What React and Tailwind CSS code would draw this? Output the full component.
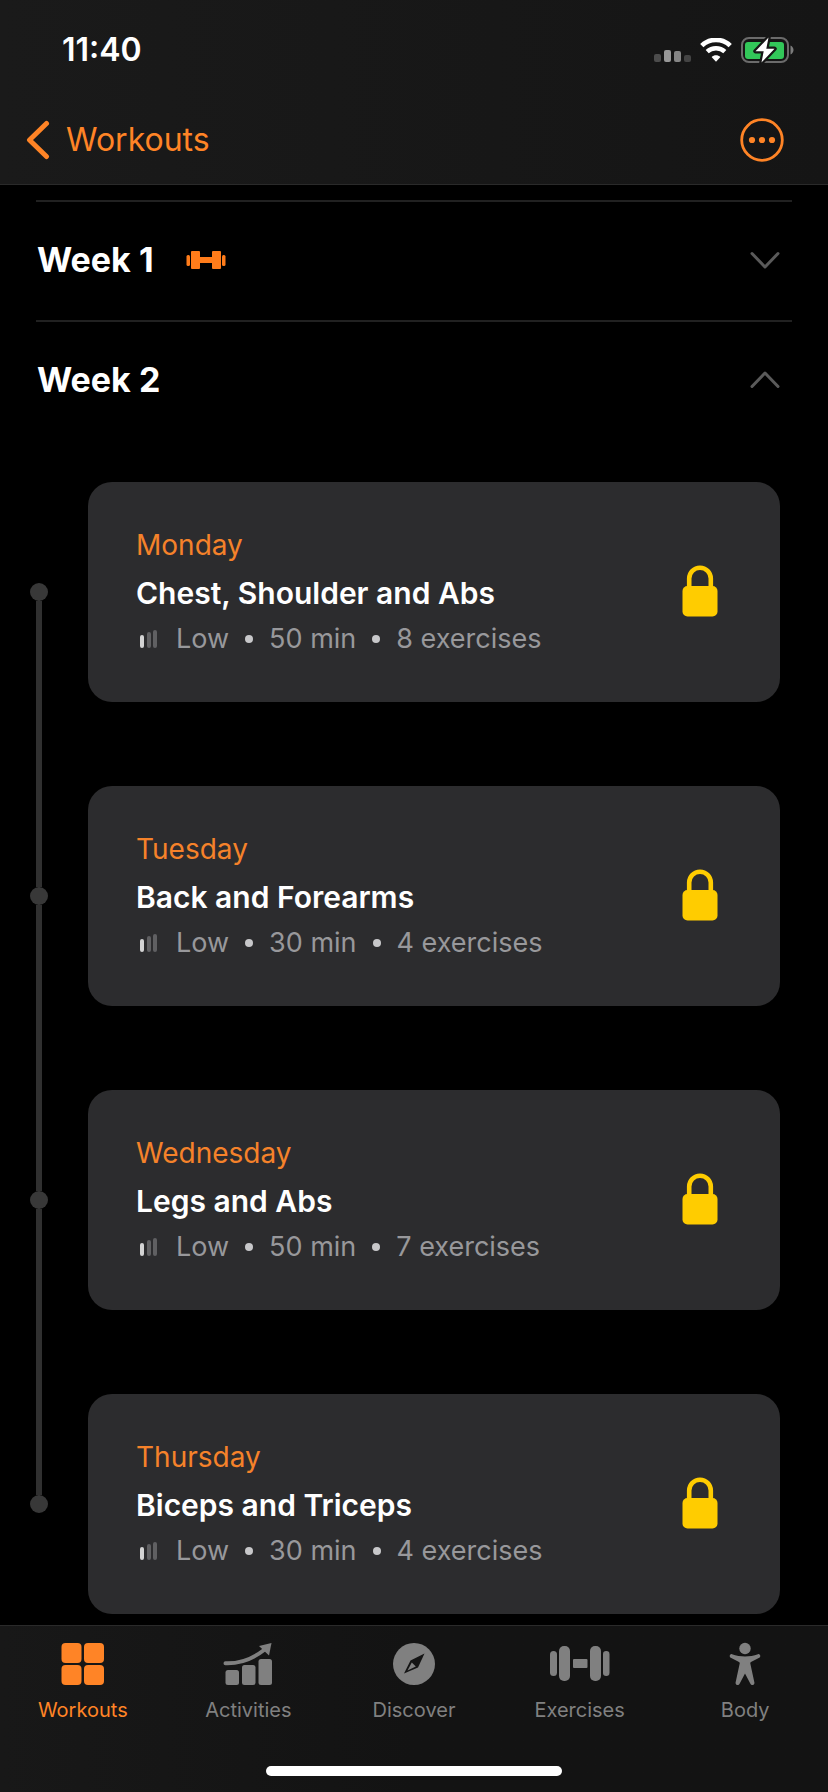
import React, { useState } from "react";

const workouts = [
  { day: "Monday", title: "Chest, Shoulder and Abs", level: "Low", minutes: 50, exercises: 8 },
  { day: "Tuesday", title: "Back and Forearms", level: "Low", minutes: 30, exercises: 4 },
  { day: "Wednesday", title: "Legs and Abs", level: "Low", minutes: 50, exercises: 7 },
  { day: "Thursday", title: "Biceps and Triceps", level: "Low", minutes: 30, exercises: 4 },
];

const SignalIcon = () => (
  <svg width="38" height="14" viewBox="0 0 38 14" aria-hidden="true">
    <rect x="0" y="5" width="7" height="8" rx="2" fill="#4c4c4c" />
    <rect x="10" y="1" width="7" height="12" rx="2" fill="#989898" />
    <rect x="20" y="2" width="7" height="11" rx="2" fill="#868686" />
    <rect x="30" y="6" width="7" height="7" rx="2" fill="#444444" />
  </svg>
);

const WifiIcon = () => (
  <svg width="32" height="24" viewBox="0 0 32 24" fill="none" aria-hidden="true">
    <path d="M1.8 7.6C9.6-.1 22.4-.1 30.2 7.6" stroke="#fff" strokeWidth="4.6" />
    <path d="M7.2 13.7C12 9.1 20 9.1 24.8 13.7" stroke="#fff" strokeWidth="4.4" />
    <path d="M11.6 19C14 16.600 18 16.600 20.400 19L16 23.800Z" fill="#fff" />
  </svg>
);

const BatteryIcon = () => (
  <svg width="54" height="28" viewBox="0 0 54 28" aria-hidden="true">
    <rect x="2" y="2" width="46" height="24" rx="7" fill="none" stroke="#6b6b6b" strokeWidth="2" />
    <path d="M50.500 9.500c2 1 3 2.600 3 4.500s-1 3.500-3 4.500z" fill="#7b7b7b" />
    <rect x="5" y="6" width="39" height="17" rx="3" fill="#32c759" />
    <path
      d="M28.500 1.600 15.500 15.200h8.200L21.500 26.400 34.500 12.800h-8.200z"
      fill="#fff"
      stroke="#161616"
      strokeWidth="4.500"
      strokeLinejoin="round"
      paintOrder="stroke"
    />
  </svg>
);

const BackIcon = () => (
  <svg width="24" height="40" viewBox="0 0 24 40" fill="none" aria-hidden="true">
    <path d="M20.500 3.500 3.500 20l17 16.500" stroke="currentColor" strokeWidth="5" strokeLinecap="round" strokeLinejoin="round" />
  </svg>
);

const MoreIcon = () => (
  <svg width="44" height="44" viewBox="0 0 44 44" aria-hidden="true">
    <circle cx="22" cy="22" r="20.300" fill="none" stroke="currentColor" strokeWidth="2.800" />
    <circle cx="12" cy="22" r="3.100" fill="currentColor" />
    <circle cx="22" cy="22" r="3.100" fill="currentColor" />
    <circle cx="32" cy="22" r="3.100" fill="currentColor" />
  </svg>
);

const SmallDumbbellIcon = () => (
  <svg width="40" height="18" viewBox="0 0 40 18" fill="#ff7c1a" aria-hidden="true">
    <rect x="0.500" y="4" width="3.500" height="11" rx="1.500" />
    <rect x="5" y="0" width="9" height="18" rx="1" />
    <rect x="13" y="6" width="14" height="6" />
    <rect x="26" y="0" width="9" height="18" rx="1" />
    <rect x="36" y="4" width="3.500" height="11" rx="1.500" />
  </svg>
);

const ChevronIcon = ({ open }) => (
  <svg width="30" height="18" viewBox="0 0 30 18" fill="none" aria-hidden="true">
    <path
      d={open ? "M2 15.500 15 2l13 13.500" : "M2 2.500 15 16 28 2.500"}
      stroke="#5a5a5a"
      strokeWidth="3"
      strokeLinecap="round"
      strokeLinejoin="round"
    />
  </svg>
);

const LevelIcon = () => (
  <svg width="18" height="18" viewBox="0 0 18 18" aria-hidden="true">
    <rect x="0" y="5" width="4" height="13" rx="2" fill="#d4d4d4" />
    <rect x="7" y="2" width="4" height="16" rx="2" fill="#606062" />
    <rect x="13" y="0" width="4" height="18" rx="2" fill="#606062" />
  </svg>
);

const LockIcon = () => (
  <svg width="36" height="52" viewBox="0 0 36 52" role="img" aria-label="Locked">
    <rect x="0.500" y="21" width="35" height="30.500" rx="5" fill="#ffcc00" />
    <path d="M7.200 23V13.500a10.800 10.800 0 0 1 21.600 0V23" fill="none" stroke="#ffcc00" strokeWidth="4.600" />
  </svg>
);

const GridIcon = () => (
  <svg width="44" height="44" viewBox="0 0 44 44" fill="currentColor" aria-hidden="true">
    <rect x="0.500" y="1" width="20" height="20" rx="4" />
    <rect x="23" y="1" width="20" height="20" rx="4" />
    <rect x="0.500" y="23" width="20" height="20" rx="4" />
    <rect x="23" y="23" width="20" height="20" rx="4" />
  </svg>
);

const ChartIcon = () => (
  <svg width="50" height="44" viewBox="0 0 50 44" fill="currentColor" aria-hidden="true">
    <rect x="2.500" y="28" width="13.500" height="15" rx="2.500" />
    <rect x="19" y="23" width="13.500" height="20" rx="2.500" />
    <rect x="35.500" y="17" width="13.500" height="26" rx="2.500" />
    <path d="M2.500 21.300C17 21.800 29 17.500 41 8" fill="none" stroke="currentColor" strokeWidth="4" strokeLinecap="round" />
    <path d="M36 4 48.500 1 46 13.500Z" />
  </svg>
);

const CompassIcon = () => (
  <svg width="44" height="44" viewBox="0 0 44 44" aria-hidden="true">
    <circle cx="22" cy="22" r="21" fill="currentColor" />
    <path d="M32.500 11.500 18.500 18.500 12 31.500 26 25.500Z" fill="#141414" />
    <path d="M19.800 20.500 23.800 24.500 15.500 28.500Z" fill="currentColor" />
  </svg>
);

const DumbbellIcon = () => (
  <svg width="60" height="44" viewBox="0 0 60 44" fill="currentColor" aria-hidden="true">
    <rect x="0" y="9" width="7" height="25" rx="3.500" />
    <rect x="9" y="4" width="11" height="35" rx="5" />
    <rect x="23" y="17" width="14.500" height="9" rx="1" />
    <rect x="40" y="4" width="11" height="35" rx="5" />
    <rect x="53" y="9" width="6.500" height="25" rx="3.200" />
  </svg>
);

const BodyIcon = () => (
  <svg width="32" height="44" viewBox="0 0 32 44" fill="currentColor" aria-hidden="true">
    <circle cx="16" cy="6.500" r="5.700" />
    <path d="M3 12.200C1 11.400-.300 14.800 1.800 15.800L10 20c.6.400.800.900.700 1.600L6.600 40.500c-.5 2.600 3 3.500 4 1.200L16 31.500l5.400 10.200c1 2.300 4.500 1.400 4-1.200L21.300 21.600c-.1-.7.100-1.200.7-1.600l8.200-4.200c2.100-1 .8-4.400-1.200-3.600-8.500 3-17.500 3-26 0Z" />
  </svg>
);

const tabs = [
  { name: "Workouts", icon: GridIcon },
  { name: "Activities", icon: ChartIcon },
  { name: "Discover", icon: CompassIcon },
  { name: "Exercises", icon: DumbbellIcon },
  { name: "Body", icon: BodyIcon },
];

const WorkoutRow = ({ workout, first, last }) => (
  <li className="flex pl-[30px] pr-12">
    {/* Timeline rail */}
    <div className="flex w-[18px] shrink-0 flex-col items-center">
      <div className={`w-[6px] flex-1 ${first ? "" : "bg-[#303030]"}`}></div>
      <div className="h-[18px] w-[18px] rounded-full bg-[#383838]"></div>
      <div className={`w-[6px] flex-1 ${last ? "" : "bg-[#303030]"}`}></div>
    </div>

    <div className="my-[42px] ml-10 flex h-[220px] flex-1 items-center justify-between rounded-3xl bg-[#2c2c2e] pb-[3px] pl-12 pr-[62px]">
      <div>
        <p className="text-[28px] leading-[44px] text-[#f5822a]">{workout.day}</p>
        <h3 className="text-[30px] font-semibold leading-[52px] text-white">
          {workout.title}
        </h3>
        <div className="flex items-center text-[27px] leading-10 text-[#98989b]">
          <span className="ml-1 mr-[18px]">
            <LevelIcon />
          </span>
          <span>{workout.level}</span>
          <span className="mx-4 h-2 w-2 rounded-full bg-[#c8c8ca]"></span>
          <span>{workout.minutes} min</span>
          <span className="mx-4 h-2 w-2 rounded-full bg-[#c8c8ca]"></span>
          <span>{workout.exercises} exercises</span>
        </div>
      </div>
      <LockIcon />
    </div>
  </li>
);

const App = () => {
  const [openWeek, setOpenWeek] = useState(2);
  const [activeTab, setActiveTab] = useState("Workouts");

  return (
    <div className="flex min-h-screen flex-col bg-black font-['Inter','Liberation_Sans',sans-serif] text-white">
      <header className="sticky top-0 z-10 border-b border-[#2a2a2a] bg-linear-to-r from-[#1a1a1a] to-[#151515]">
        {/* Status bar */}
        <div className="flex h-24 items-center justify-between pl-[62px] pr-[34px] pt-1">
          <span className="text-[32px] font-semibold leading-10">11:40</span>
          <div className="flex items-center gap-2">
            <span className="mt-3">
              <SignalIcon />
            </span>
            <WifiIcon />
            <BatteryIcon />
          </div>
        </div>
        <div className="flex h-[88px] items-center justify-between pl-[26px] pr-11 text-[#ff8426]">
          <a href="#workouts" className="flex items-center gap-4 text-[32px] leading-10">
            <BackIcon />
            Workouts
          </a>
          <button type="button" aria-label="More options">
            <MoreIcon />
          </button>
        </div>
      </header>

      <main className="flex-1 pt-[15px]">
        {[1, 2].map((week) => (
          <h2 key={week} className="mx-9 border-t-2 border-[#212121]">
            <button
              type="button"
              aria-expanded={openWeek === week}
              onClick={() => setOpenWeek(openWeek === week ? null : week)}
              className="flex h-[118px] w-full items-center justify-between pb-[3px] pl-px pr-3 text-[34px] font-bold"
            >
              <span className="flex items-center gap-8">
                Week {week}
                {week === 1 && <SmallDumbbellIcon />}
              </span>
              <ChevronIcon open={openWeek === week} />
            </button>
          </h2>
        ))}

        {openWeek === 2 && (
          <ul className="mb-[-31px]">
            {workouts.map((workout, index) => (
              <WorkoutRow
                key={workout.day}
                workout={workout}
                first={index === 0}
                last={index === workouts.length - 1}
              />
            ))}
          </ul>
        )}
      </main>

      {/* Tab bar */}
      <footer className="sticky bottom-0 z-10 border-t border-[#2a2a2a] bg-linear-to-r from-[#181818] to-[#131313] to-50%">
        <nav className="grid grid-cols-5 pt-4">
          {tabs.map(({ name, icon: Icon }) => (
            <button
              key={name}
              type="button"
              onClick={() => setActiveTab(name)}
              className={`flex flex-col items-center gap-3 text-[20px] leading-6 ${
                activeTab === name ? "text-[#ff8426]" : "text-[#808080]"
              }`}
            >
              <Icon />
              {name}
            </button>
          ))}
        </nav>
        <div className="mx-auto mb-4 mt-11 h-[10px] w-[296px] rounded-full bg-white"></div>
      </footer>
    </div>
  );
};

export default App;
